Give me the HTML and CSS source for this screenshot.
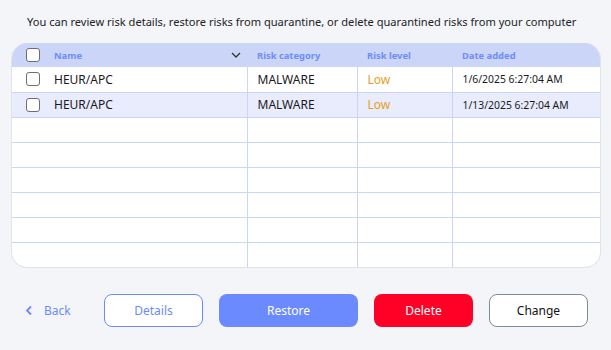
FILE: index.html
```html
<!DOCTYPE html>
<html lang="en">
<head>
    <meta charset="UTF-8">
    <title>Quarantine</title>
    <link rel="stylesheet" href="styles.css">
</head>
<body>
    <div class="page">
        <p class="intro">You can review risk details, restore risks from quarantine, or delete quarantined risks from your computer</p>

        <div class="table-wrap">
            <table class="risks">
                <thead>
                    <tr>
                        <th class="check"><span class="box"></span></th>
                        <th class="name">
                            <div class="name-head">
                                <span>Name</span>
                                <svg width="10" height="6" viewBox="0 0 10 6"><path d="M1 1l4 4 4-4" fill="none" stroke="#333" stroke-width="1.3"/></svg>
                            </div>
                        </th>
                        <th class="cat">Risk category</th>
                        <th class="lvl">Risk level</th>
                        <th class="date">Date added</th>
                    </tr>
                </thead>
                <tbody>
                    <tr>
                        <td class="check"><span class="box"></span></td>
                        <td class="name">HEUR/APC</td>
                        <td>MALWARE</td>
                        <td class="low">Low</td>
                        <td class="date">1/6/2025 6:27:04 AM</td>
                    </tr>
                    <tr class="alt">
                        <td class="check"><span class="box"></span></td>
                        <td class="name">HEUR/APC</td>
                        <td>MALWARE</td>
                        <td class="low">Low</td>
                        <td class="date">1/13/2025 6:27:04 AM</td>
                    </tr>
                    <tr><td class="check"></td><td class="name"></td><td></td><td></td><td></td></tr>
                    <tr><td class="check"></td><td class="name"></td><td></td><td></td><td></td></tr>
                    <tr><td class="check"></td><td class="name"></td><td></td><td></td><td></td></tr>
                    <tr><td class="check"></td><td class="name"></td><td></td><td></td><td></td></tr>
                    <tr><td class="check"></td><td class="name"></td><td></td><td></td><td></td></tr>
                    <tr class="last"><td class="check"></td><td class="name"></td><td></td><td></td><td></td></tr>
                </tbody>
            </table>
        </div>

        <div class="actions">
            <a class="back" href="#">
                <svg width="8" height="11" viewBox="0 0 8 11"><path d="M6 1.5L2 5.5l4 4" fill="none" stroke="#6b8afe" stroke-width="1.8"/></svg>
                <span>Back</span>
            </a>
            <button class="btn outline">Details</button>
            <button class="btn primary">Restore</button>
            <button class="btn danger">Delete</button>
            <button class="btn plain">Change</button>
        </div>
    </div>
</body>
</html>
```

FILE: styles.css
```css
body {
    margin: 0;
    background-color: #f4f5f9;
    font-family: "Noto Sans", "Open Sans", sans-serif;
    color: #1a1a1a;
}
.page {
    width: 611px;
    height: 350px;
    padding: 13px 10px 0 11px;
    box-sizing: border-box;
}
.intro {
    margin: 0 0 12px;
    padding-left: 16px;
    font-size: 11.1px;
    line-height: 18px;
    white-space: nowrap;
    color: #222;
}
.table-wrap {
    width: 590px;
    height: 225px;
    background-color: #fff;
    border: 1px solid #dfe3ea;
    border-top: none;
    border-radius: 16px;
    overflow: hidden;
    box-sizing: border-box;
}
.risks {
    width: 590px;
    border-collapse: collapse;
    table-layout: fixed;
    margin-left: -1px;
}
.risks th,
.risks td {
    box-sizing: border-box;
    padding: 0 0 0 10px;
    text-align: left;
}
.risks th {
    height: 24px;
    background-color: #cbd5f8;
    color: #6e8cfb;
    font-size: 9.4px;
    font-weight: bold;
}
.risks td {
    height: 25px;
    border-bottom: 1px solid #cad6f7;
    border-left: 1px solid #cad6f7;
    font-size: 12px;
}
.risks tr.last td {
    border-bottom: none;
}
.risks .check {
    width: 43px;
    padding-left: 15px;
    border-left: none;
}
.risks .name {
    width: 193px;
    border-left: none;
    padding-left: 0;
}
.risks .cat { width: 110px; }
.risks .lvl { width: 95px; }
.risks td.date {
    font-size: 10.4px;
}
.name-head {
    display: flex;
    align-items: center;
    justify-content: space-between;
    padding-right: 6px;
}
.box {
    display: block;
    width: 14px;
    height: 14px;
    box-sizing: border-box;
    border: 1px solid #6e6e72;
    border-radius: 3px;
    background-color: #fff;
}
.alt td {
    background-color: #e8ecfd;
}
.low {
    color: #e5a11f;
}
.actions {
    display: flex;
    align-items: center;
    gap: 16px;
    margin-top: 26px;
}
.back {
    display: flex;
    align-items: center;
    gap: 11px;
    width: 77px;
    box-sizing: border-box;
    padding-left: 14px;
    color: #6b8afe;
    font-size: 12px;
    text-decoration: none;
}
.btn {
    height: 33px;
    width: 99px;
    border-radius: 8px;
    font-family: inherit;
    font-size: 12px;
    border: 1px solid transparent;
    padding: 0;
}
.outline {
    background-color: #fff;
    border-color: #6b8afe;
    color: #6b8afe;
}
.primary {
    width: 139px;
    background-color: #6b8afe;
    color: #fff;
}
.danger {
    background-color: #ff0026;
    color: #fff;
}
.plain {
    background-color: #fff;
    border-color: #7c8c98;
    color: #111;
}
```
